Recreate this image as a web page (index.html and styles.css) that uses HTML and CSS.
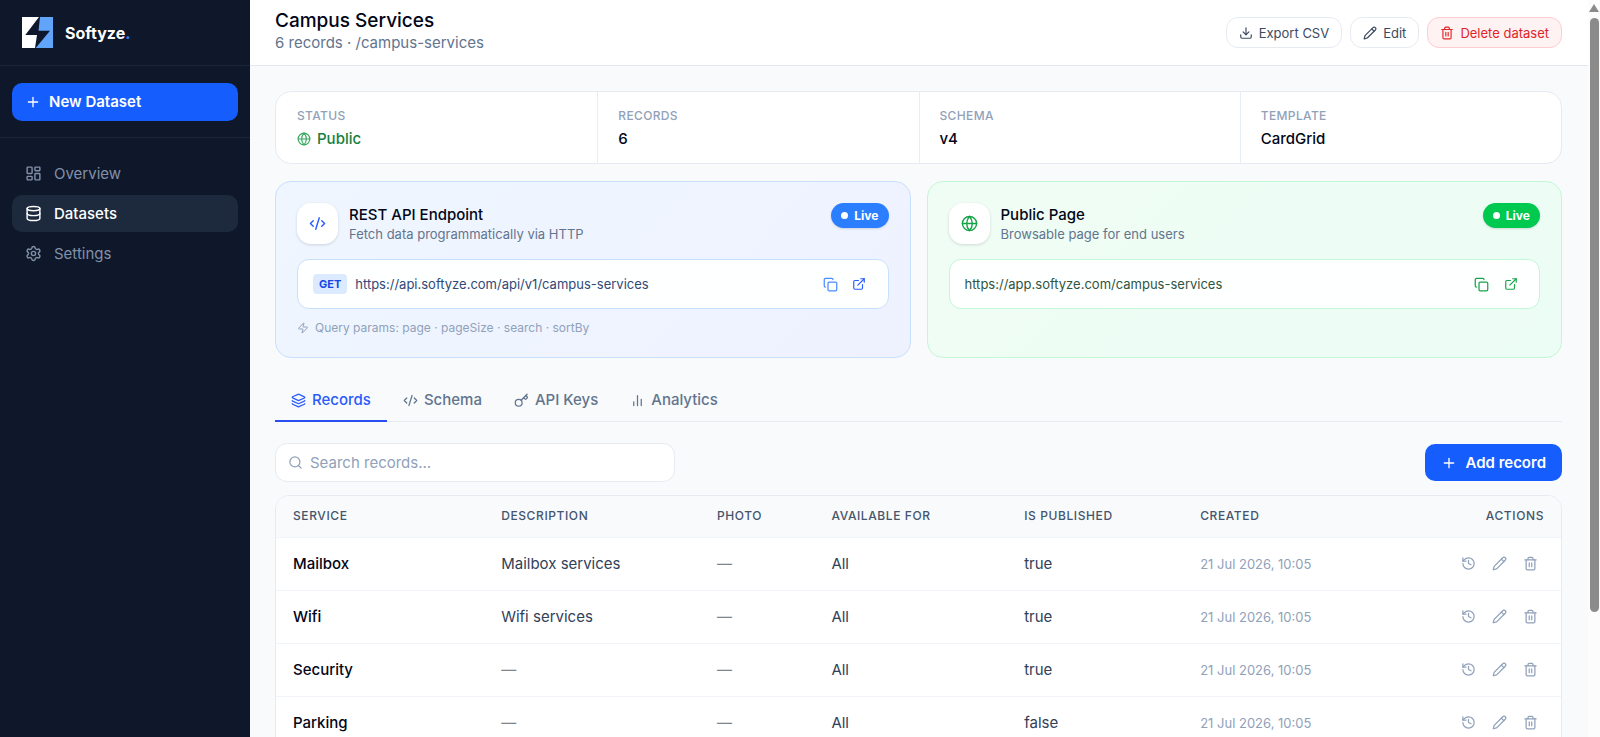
FILE: index.html
```html
<!DOCTYPE html>
<html lang="en">
<head>
<meta charset="utf-8">
<meta name="viewport" content="width=device-width, initial-scale=1">
<title>Campus Services – Softyze</title>
<link rel="stylesheet" href="styles.css">
</head>
<body>
<svg class="sprite" aria-hidden="true">
  <symbol id="plus" viewBox="0 0 24 24"><path d="M5 12h14M12 5v14"/></symbol>
  <symbol id="dashboard" viewBox="0 0 24 24"><rect x="3" y="3" width="7" height="9" rx="1"/><rect x="14" y="3" width="7" height="5" rx="1"/><rect x="14" y="12" width="7" height="9" rx="1"/><rect x="3" y="16" width="7" height="5" rx="1"/></symbol>
  <symbol id="database" viewBox="0 0 24 24"><ellipse cx="12" cy="5" rx="9" ry="3"/><path d="M3 5v14a9 3 0 0 0 18 0V5"/><path d="M3 12a9 3 0 0 0 18 0"/></symbol>
  <symbol id="settings" viewBox="0 0 24 24"><path d="M9.671 4.136a2.34 2.34 0 0 1 4.659 0 2.34 2.34 0 0 0 3.319 1.915 2.34 2.34 0 0 1 2.33 4.033 2.34 2.34 0 0 0 0 3.831 2.34 2.34 0 0 1-2.33 4.033 2.34 2.34 0 0 0-3.319 1.915 2.34 2.34 0 0 1-4.659 0 2.34 2.34 0 0 0-3.32-1.915 2.34 2.34 0 0 1-2.33-4.033 2.34 2.34 0 0 0 0-3.831A2.34 2.34 0 0 1 6.35 6.051a2.34 2.34 0 0 0 3.319-1.915"/><circle cx="12" cy="12" r="3"/></symbol>
  <symbol id="download" viewBox="0 0 24 24"><path d="M12 15V3"/><path d="M21 15v4a2 2 0 0 1-2 2H5a2 2 0 0 1-2-2v-4"/><path d="m7 10 5 5 5-5"/></symbol>
  <symbol id="pencil" viewBox="0 0 24 24"><path d="M21.174 6.812a1 1 0 0 0-3.986-3.987L3.842 16.174a2 2 0 0 0-.5.83l-1.321 4.352a.5.5 0 0 0 .623.622l4.353-1.32a2 2 0 0 0 .83-.497z"/><path d="m15 5 4 4"/></symbol>
  <symbol id="trash" viewBox="0 0 24 24"><path d="M10 11v6M14 11v6"/><path d="M19 6v14a2 2 0 0 1-2 2H7a2 2 0 0 1-2-2V6"/><path d="M3 6h18"/><path d="M8 6V4a2 2 0 0 1 2-2h4a2 2 0 0 1 2 2v2"/></symbol>
  <symbol id="globe" viewBox="0 0 24 24"><circle cx="12" cy="12" r="10"/><path d="M12 2a14.5 14.5 0 0 0 0 20 14.5 14.5 0 0 0 0-20"/><path d="M2 12h20"/></symbol>
  <symbol id="code" viewBox="0 0 24 24"><path d="m18 16 4-4-4-4"/><path d="m6 8-4 4 4 4"/><path d="m14.5 4-5 16"/></symbol>
  <symbol id="copy" viewBox="0 0 24 24"><rect x="8" y="8" width="14" height="14" rx="2"/><path d="M4 16c-1.100 0-2-.9-2-2V4c0-1.100.9-2 2-2h10c1.100 0 2 .9 2 2"/></symbol>
  <symbol id="external" viewBox="0 0 24 24"><path d="M15 3h6v6"/><path d="M10 14 21 3"/><path d="M18 13v6a2 2 0 0 1-2 2H5a2 2 0 0 1-2-2V8a2 2 0 0 1 2-2h6"/></symbol>
  <symbol id="zap" viewBox="0 0 24 24"><path d="M4 14a1 1 0 0 1-.78-1.630l9.900-10.200a.5.5 0 0 1 .86.460l-1.920 6.020A1 1 0 0 0 13 10h7a1 1 0 0 1 .78 1.630l-9.900 10.200a.5.5 0 0 1-.86-.460l1.920-6.020A1 1 0 0 0 11 14z"/></symbol>
  <symbol id="layers" viewBox="0 0 24 24"><path d="M12.830 2.180a2 2 0 0 0-1.660 0L2.600 6.080a1 1 0 0 0 0 1.830l8.580 3.910a2 2 0 0 0 1.660 0l8.580-3.900a1 1 0 0 0 0-1.830z"/><path d="M2 12a1 1 0 0 0 .58.910l8.600 3.910a2 2 0 0 0 1.650 0l8.580-3.900A1 1 0 0 0 22 12"/><path d="M2 17a1 1 0 0 0 .58.910l8.600 3.910a2 2 0 0 0 1.650 0l8.580-3.900A1 1 0 0 0 22 17"/></symbol>
  <symbol id="key" viewBox="0 0 24 24"><circle cx="7.500" cy="15.500" r="5.500"/><path d="m21 2-9.600 9.600"/><path d="m15.500 7.500 2.300 2.300a1 1 0 0 0 1.400 0l2.100-2.100a1 1 0 0 0 0-1.400L19 4"/></symbol>
  <symbol id="chart" viewBox="0 0 24 24"><path d="M18 20V10M12 20V4M6 20v-6"/></symbol>
  <symbol id="search" viewBox="0 0 24 24"><circle cx="11" cy="11" r="8"/><path d="m21 21-4.300-4.300"/></symbol>
  <symbol id="history" viewBox="0 0 24 24"><path d="M3 12a9 9 0 1 0 9-9 9.750 9.750 0 0 0-6.740 2.740L3 8"/><path d="M3 3v5h5"/><path d="M12 7v5l4 2"/></symbol>
</svg>

<aside class="sidebar">
  <div class="brand">
    <svg class="logo" viewBox="0 0 31 31" aria-hidden="true">
      <path fill="#fff" d="M0 0h17L3.300 18H15L13 31H0z"/>
      <path fill="#60a5fa" d="M18 0h13v31H13.700L28 13.700H16.500z"/>
    </svg>
    <span class="brand-name">Softyze<span class="brand-dot">.</span></span>
  </div>
  <div class="sidebar-action">
    <button class="btn-primary btn-new" type="button"><svg class="icon i16"><use href="#plus"/></svg>New Dataset</button>
  </div>
  <nav class="nav">
    <a class="nav-item" href="#overview"><svg class="icon i17"><use href="#dashboard"/></svg>Overview</a>
    <a class="nav-item active" href="#datasets" aria-current="page"><svg class="icon i17"><use href="#database"/></svg>Datasets</a>
    <a class="nav-item" href="#settings-page"><svg class="icon i17"><use href="#settings"/></svg>Settings</a>
  </nav>
</aside>

<main class="main">
  <header class="topbar">
    <div class="heading">
      <h1>Campus Services</h1>
      <p>6 records · /campus-services</p>
    </div>
    <div class="toolbar">
      <button class="btn-outline" type="button"><svg class="icon i14"><use href="#download"/></svg>Export CSV</button>
      <button class="btn-outline" type="button"><svg class="icon i14"><use href="#pencil"/></svg>Edit</button>
      <button class="btn-outline danger" type="button"><svg class="icon i14"><use href="#trash"/></svg>Delete dataset</button>
    </div>
  </header>

  <div class="content">
    <dl class="stats">
      <div class="stat"><dt>Status</dt><dd class="public"><svg class="icon i14"><use href="#globe"/></svg>Public</dd></div>
      <div class="stat"><dt>Records</dt><dd>6</dd></div>
      <div class="stat"><dt>Schema</dt><dd>v4</dd></div>
      <div class="stat"><dt>Template</dt><dd>CardGrid</dd></div>
    </dl>

    <div class="links">
      <section class="link-card blue">
        <div class="link-head">
          <span class="link-icon"><svg class="icon i17"><use href="#code"/></svg></span>
          <div class="link-title"><h2>REST API Endpoint</h2><p>Fetch data programmatically via HTTP</p></div>
          <span class="live">Live</span>
        </div>
        <div class="url-box">
          <span class="method">GET</span>
          <span class="url">https://api.softyze.com/api/v1/campus-services</span>
          <button class="icon-btn copy" type="button" aria-label="Copy API URL"><svg class="icon i15"><use href="#copy"/></svg></button>
          <a class="icon-btn" href="#api" aria-label="Open API URL"><svg class="icon i14"><use href="#external"/></svg></a>
        </div>
        <p class="hint"><svg class="icon i12"><use href="#zap"/></svg>Query params: page · pageSize · search · sortBy</p>
      </section>
      <section class="link-card green">
        <div class="link-head">
          <span class="link-icon"><svg class="icon i17"><use href="#globe"/></svg></span>
          <div class="link-title"><h2>Public Page</h2><p>Browsable page for end users</p></div>
          <span class="live">Live</span>
        </div>
        <div class="url-box">
          <span class="url">https://app.softyze.com/campus-services</span>
          <button class="icon-btn copy" type="button" aria-label="Copy page URL"><svg class="icon i15"><use href="#copy"/></svg></button>
          <a class="icon-btn" href="#page" aria-label="Open public page"><svg class="icon i14"><use href="#external"/></svg></a>
        </div>
      </section>
    </div>

    <div class="tabs" role="tablist">
      <button class="tab active" type="button" role="tab" aria-selected="true"><svg class="icon i15"><use href="#layers"/></svg>Records</button>
      <button class="tab" type="button" role="tab"><svg class="icon i15"><use href="#code"/></svg>Schema</button>
      <button class="tab" type="button" role="tab"><svg class="icon i15"><use href="#key"/></svg>API Keys</button>
      <button class="tab" type="button" role="tab"><svg class="icon i15"><use href="#chart"/></svg>Analytics</button>
    </div>

    <div class="filters">
      <label class="search"><svg class="icon i15"><use href="#search"/></svg><input type="search" placeholder="Search records..." aria-label="Search records"></label>
      <button class="btn-primary btn-add" type="button"><svg class="icon i16"><use href="#plus"/></svg>Add record</button>
    </div>

    <div class="table-card">
      <table>
        <colgroup><col class="c-service"><col class="c-desc"><col class="c-photo"><col class="c-avail"><col class="c-pub"><col class="c-created"><col class="c-actions"></colgroup>
        <thead>
          <tr><th>Service</th><th>Description</th><th>Photo</th><th>Available for</th><th>Is published</th><th>Created</th><th class="right">Actions</th></tr>
        </thead>
        <tbody>
          <tr><td class="name">Mailbox</td><td>Mailbox services</td><td class="empty">—</td><td>All</td><td>true</td><td class="date">21 Jul 2026, 10:05</td>
            <td><div class="actions"><button type="button" aria-label="History of Mailbox"><svg class="icon i15"><use href="#history"/></svg></button><button type="button" aria-label="Edit Mailbox"><svg class="icon i15"><use href="#pencil"/></svg></button><button type="button" aria-label="Delete Mailbox"><svg class="icon i15"><use href="#trash"/></svg></button></div></td></tr>
          <tr><td class="name">Wifi</td><td>Wifi services</td><td class="empty">—</td><td>All</td><td>true</td><td class="date">21 Jul 2026, 10:05</td>
            <td><div class="actions"><button type="button" aria-label="History of Wifi"><svg class="icon i15"><use href="#history"/></svg></button><button type="button" aria-label="Edit Wifi"><svg class="icon i15"><use href="#pencil"/></svg></button><button type="button" aria-label="Delete Wifi"><svg class="icon i15"><use href="#trash"/></svg></button></div></td></tr>
          <tr><td class="name">Security</td><td class="empty">—</td><td class="empty">—</td><td>All</td><td>true</td><td class="date">21 Jul 2026, 10:05</td>
            <td><div class="actions"><button type="button" aria-label="History of Security"><svg class="icon i15"><use href="#history"/></svg></button><button type="button" aria-label="Edit Security"><svg class="icon i15"><use href="#pencil"/></svg></button><button type="button" aria-label="Delete Security"><svg class="icon i15"><use href="#trash"/></svg></button></div></td></tr>
          <tr><td class="name">Parking</td><td class="empty">—</td><td class="empty">—</td><td>All</td><td>false</td><td class="date">21 Jul 2026, 10:05</td>
            <td><div class="actions"><button type="button" aria-label="History of Parking"><svg class="icon i15"><use href="#history"/></svg></button><button type="button" aria-label="Edit Parking"><svg class="icon i15"><use href="#pencil"/></svg></button><button type="button" aria-label="Delete Parking"><svg class="icon i15"><use href="#trash"/></svg></button></div></td></tr>
        </tbody>
      </table>
    </div>
  </div>
</main>
<div class="scrollbar" aria-hidden="true"><span class="scroll-arrow"></span><span class="scroll-thumb"></span></div>
</body>
</html>
```
FILE: styles.css
```css
*, *::before, *::after { box-sizing: border-box; }
body {
  margin: 0;
  display: flex;
  height: 100vh;
  overflow: hidden;
  background: #f8fafc;
  color: #020618;
  font: 400 15px/20px Inter, "Liberation Sans", sans-serif;
}
h1, h2, p, dl, dd { margin: 0; }
button, input { font: inherit; color: inherit; }
button { cursor: pointer; }
a { color: inherit; text-decoration: none; }
.sprite { display: none; }
.icon { flex: none; fill: none; stroke: currentColor; stroke-width: 2; stroke-linecap: round; stroke-linejoin: round; }
.i12 { width: 12px; height: 12px; }
.i14 { width: 14px; height: 14px; }
.i15 { width: 15px; height: 15px; }
.i16 { width: 16px; height: 16px; }
.i17 { width: 17px; height: 17px; }

/* Sidebar */
.sidebar { flex: none; width: 250px; background: #0f172a; color: #8190a8; }
.brand { display: flex; align-items: center; gap: 12px; height: 66px; padding: 0 22px; border-bottom: 1px solid #1b2537; }
.logo { width: 31px; height: 31px; }
.brand-name { color: #fff; font-size: 16px; font-weight: 700; }
.brand-dot { color: #2b7fff; }
.sidebar-action { padding: 17px 12px 16px; border-bottom: 1px solid #1b2537; }
.btn-primary { display: flex; align-items: center; border: 0; border-radius: 10px; background: #155dfc; color: #fff; font-weight: 600; }
.btn-new { width: 100%; height: 38px; padding: 0 13px; gap: 8px; }
.nav { display: flex; flex-direction: column; gap: 3px; padding: 17px 12px; }
.nav-item { display: flex; align-items: center; gap: 12px; height: 37px; padding: 0 13px; border-radius: 10px; }
.nav-item.active { background: #1d293d; color: #fff; font-weight: 500; }

/* Header */
.main { flex: 1; min-width: 0; overflow: hidden; }
.topbar { display: flex; align-items: center; justify-content: space-between; height: 66px; padding: 0 26px 0 25px; background: #fff; border-bottom: 1px solid #e2e8f0; }
.heading { padding-bottom: 3px; }
.heading h1 { font-size: 19px; font-weight: 500; line-height: 24px; }
.heading p { color: #62748e; line-height: 20px; }
.toolbar { display: flex; gap: 8px; }
.btn-outline { display: flex; align-items: center; gap: 6px; height: 31px; padding: 0 12px; border: 1px solid #e6ebf1; border-radius: 12px; background: #fff; color: #3c4a5f; font-size: 13px; }
.btn-outline.danger { border-color: #ffccd0; background: #fef2f2; color: #e02428; }

/* Summary */
.content { display: flex; flex-direction: column; padding: 25px 26px 25px 25px; }
.stats { display: grid; grid-template-columns: repeat(4, 1fr); border: 1px solid #e6ebf1; border-radius: 16px; background: #fff; }
.stat { padding: 14px 21px; }
.stat + .stat { padding-left: 20px; border-left: 1px solid #e8edf3; }
.stat dt { color: #90a1b9; font-size: 12px; font-weight: 500; line-height: 20px; letter-spacing: 0.03em; text-transform: uppercase; }
.stat dd { display: flex; align-items: center; gap: 6px; padding-top: 3px; font-weight: 500; }
.stat .public { color: #178040; }
.public .icon { color: #35a85d; }

/* Endpoint cards */
.links { display: grid; grid-template-columns: repeat(2, 1fr); gap: 16px; padding-top: 17px; }
.link-card { padding: 21px 21px 19px; border: 1px solid; border-radius: 16px; }
.blue { border-color: #c8e0ff; background: linear-gradient(135deg, #eff6ff, #eef2ff); }
.green { border-color: #c3f8d6; background: linear-gradient(135deg, #f0fdf4, #ecfdf5); }
.link-head { display: flex; gap: 11px; }
.link-icon { display: flex; align-items: center; justify-content: center; width: 41px; height: 41px; border-radius: 14px; background: #fff; box-shadow: 0 1px 3px #0f172a26; }
.blue .link-icon { color: #2a5bfb; }
.green .link-icon { color: #16a34a; }
.link-title { flex: 1; padding-top: 2px; }
.link-title h2 { font-size: 15px; font-weight: 500; line-height: 20px; }
.link-title p { color: #62748e; font-size: 13px; line-height: 18px; }
.live { display: flex; align-items: center; gap: 6px; height: 25px; padding: 0 10px; border-radius: 13px; color: #fff; font-size: 12px; font-weight: 700; box-shadow: 0 1px 2px #0f172a26; }
.live::before { content: ""; width: 7px; height: 7px; border-radius: 50%; background: #fff; }
.blue .live { background: #2b7fff; }
.green .live { background: #00c950; }
.url-box { display: flex; align-items: center; height: 50px; margin-top: 15px; padding: 0 14px 0 15px; border: 1px solid; border-color: inherit; border-radius: 12px; background: #fffffff0; font-size: 13px; }
.method { margin-right: 8px; padding: 0 6px; border-radius: 4px; background: #dbeafe; color: #1447e6; font-size: 11px; font-weight: 700; }
.url { flex: 1; color: #314977; }
.green .url { color: #2f5540; }
.icon-btn { display: flex; align-items: center; justify-content: center; width: 29px; height: 29px; padding: 0; border: 0; background: none; }
.blue .icon-btn { color: #2a5bfb; }
.blue .copy { color: #4b8cff; }
.green .icon-btn { color: #16a34a; }
.hint { display: flex; align-items: center; gap: 6px; padding-top: 9px; color: #90a1b9; font-size: 12px; }

/* Tabs */
.tabs { display: flex; margin-top: 20px; border-bottom: 1px solid #e6ebf1; }
.tab { display: flex; align-items: center; gap: 6px; height: 44px; margin-bottom: -1px; padding: 2px 16px 0; border: 0; border-bottom: 2px solid transparent; background: none; color: #62748e; font-weight: 500; }
.tab.active { border-color: #2a4ff0; color: #2a5bfb; }

/* Records */
.filters { display: flex; align-items: center; justify-content: space-between; padding: 21px 0 13px; }
.search { display: flex; align-items: center; gap: 7px; width: 400px; height: 39px; padding: 0 12px; border: 1px solid #e6ebf1; border-radius: 12px; background: #fff; color: #90a1b9; }
.search input { flex: 1; min-width: 0; padding: 0; border: 0; outline: 0; background: none; color: #020618; }
.search input::placeholder { color: #90a1b9; opacity: 1; }
.btn-add { height: 37px; padding: 0 16px; gap: 8px; }
.table-card { overflow: hidden; border: 1px solid #e6ebf1; border-radius: 14px; background: #fff; }
table { width: 100%; border-collapse: collapse; table-layout: fixed; }
.c-service { width: 16.2%; }
.c-desc { width: 16.8%; }
.c-photo { width: 8.9%; }
.c-avail { width: 15%; }
.c-pub { width: 13.7%; }
.c-created { width: 17%; }
th { height: 41px; padding: 0 17px; border-bottom: 1px solid #f1f5f9; background: #f8fafc; color: #45556c; font-size: 12px; font-weight: 500; letter-spacing: 0.05em; text-align: left; text-transform: uppercase; }
th.right { text-align: right; }
td { height: 53px; padding: 0 17px; border-bottom: 1px solid #f1f5f9; color: #314158; }
td.name { color: #020618; font-weight: 500; }
td.empty { color: #80858c; }
td.date { color: #90a1b9; font-size: 13px; }
.actions { display: flex; justify-content: flex-end; gap: 3px; }
.actions button { display: flex; align-items: center; justify-content: center; width: 28px; height: 28px; padding: 0; border: 0; background: none; color: #90a1b9; }

/* Scroll track */
.scrollbar { flex: none; display: flex; flex-direction: column; align-items: center; width: 12px; padding-top: 4px; background: #fcfcfc; }
.scroll-arrow { border: 5px solid transparent; border-top: 0; border-bottom: 8px solid #8b8b8b; }
.scroll-thumb { width: 9px; height: 81%; margin-top: 6px; border-radius: 5px; background: #8b8b8b; }
```
